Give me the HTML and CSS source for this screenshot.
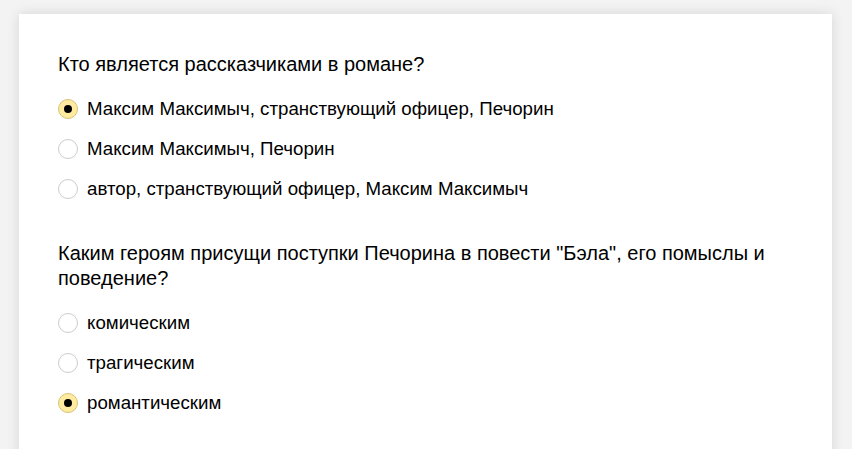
FILE: index.html
```html
<!DOCTYPE html>
<html lang="ru">
<head>
    <meta charset="UTF-8">
    <title>Тест</title>
    <link rel="stylesheet" href="styles.css">
</head>
<body>
    <div class="card">
        <div class="question">
            <p class="question-title">Кто является рассказчиками в романе?</p>
            <label class="option">
                <input type="radio" name="q1" checked>
                <span class="radio"></span>
                <span class="option-text">Максим Максимыч, странствующий офицер, Печорин</span>
            </label>
            <label class="option">
                <input type="radio" name="q1">
                <span class="radio"></span>
                <span class="option-text">Максим Максимыч, Печорин</span>
            </label>
            <label class="option">
                <input type="radio" name="q1">
                <span class="radio"></span>
                <span class="option-text">автор, странствующий офицер, Максим Максимыч</span>
            </label>
        </div>

        <div class="question">
            <p class="question-title">Каким героям присущи поступки Печорина в повести "Бэла", его помыслы и поведение?</p>
            <label class="option">
                <input type="radio" name="q2">
                <span class="radio"></span>
                <span class="option-text">комическим</span>
            </label>
            <label class="option">
                <input type="radio" name="q2">
                <span class="radio"></span>
                <span class="option-text">трагическим</span>
            </label>
            <label class="option">
                <input type="radio" name="q2" checked>
                <span class="radio"></span>
                <span class="option-text">романтическим</span>
            </label>
        </div>
    </div>
</body>
</html>
```

FILE: styles.css
```css
body {
    margin: 0;
    padding: 14px 20px 0 19px;
    background-color: #f3f3f3;
    font-family: Arial, 'Liberation Sans', sans-serif;
    color: #000;
    overflow: hidden;
}

.card {
    width: 735px;
    min-height: 420px;
    background-color: #fff;
    padding: 38px 39px 0 39px;
    box-shadow: 0 0 12px rgba(0, 0, 0, 0.12);
}

.question {
    margin-bottom: 32px;
}

.question-title {
    margin: 0 0 12px 0;
    font-size: 20px;
    line-height: 25px;
}

.option {
    display: flex;
    align-items: center;
    height: 40px;
    font-size: 18.7px;
    cursor: pointer;
}

.option input {
    display: none;
}

.radio {
    position: relative;
    box-sizing: border-box;
    width: 20px;
    height: 20px;
    margin-right: 9px;
    border: 1px solid #ccc;
    border-radius: 50%;
    background-color: #fff;
}

.option input:checked + .radio {
    background-color: #ffeba0;
    border-color: #d9c276;
}

.option input:checked + .radio::after {
    content: "";
    position: absolute;
    top: 5px;
    left: 5px;
    width: 8px;
    height: 8px;
    border-radius: 50%;
    background-color: #000;
}
```
